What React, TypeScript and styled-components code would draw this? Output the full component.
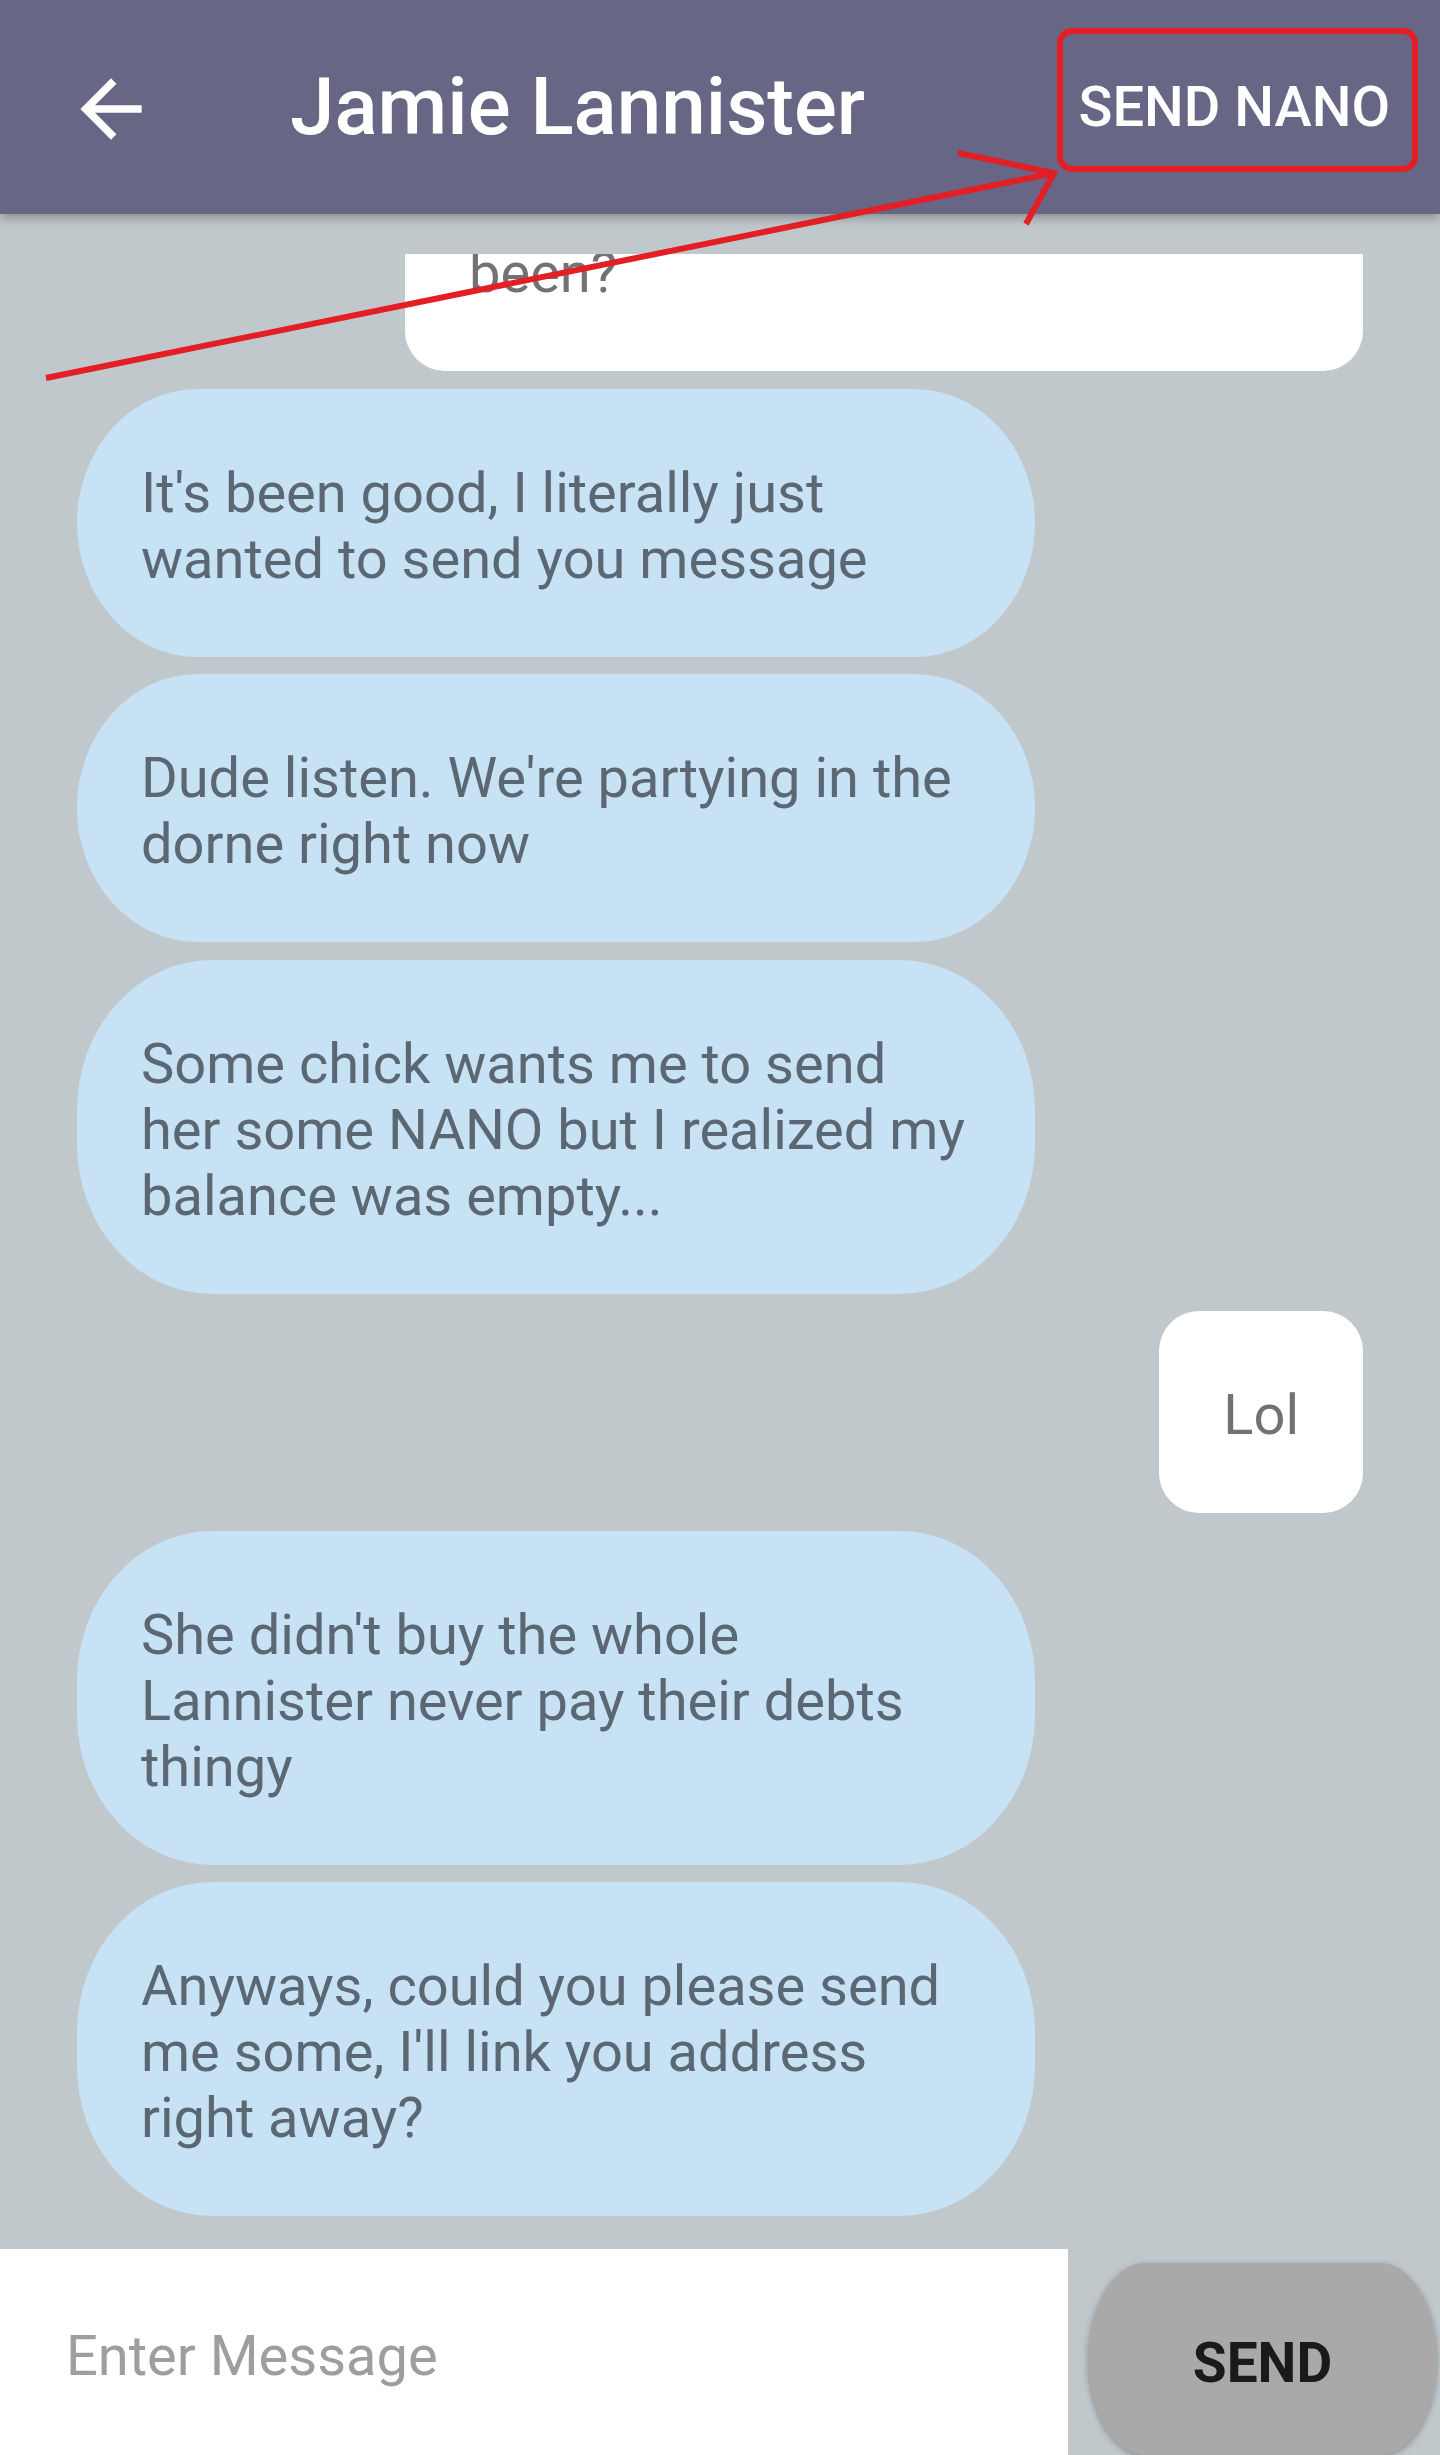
import React from 'react';
import styled, { createGlobalStyle } from 'styled-components';

const GlobalStyle = createGlobalStyle`
  html, body {
    margin: 0;
    padding: 0;
    background: #c1c8cc;
    font-family: Roboto, 'Noto Sans', Arial, sans-serif;
  }
`;

type Message = {
  id: number;
  mine: boolean;
  lines: string[];
};

const messages: Message[] = [
  { id: 1, mine: true, lines: ['Hey brother, how have you', 'been?'] },
  { id: 2, mine: false, lines: ["It's been good, I literally just", 'wanted to send you message'] },
  { id: 3, mine: false, lines: ["Dude listen. We're partying in the", 'dorne right now'] },
  {
    id: 4,
    mine: false,
    lines: ['Some chick wants me to send', 'her some NANO but I realized my', 'balance was empty...'],
  },
  { id: 5, mine: true, lines: ['Lol'] },
  {
    id: 6,
    mine: false,
    lines: ["She didn't buy the whole", 'Lannister never pay their debts', 'thingy'],
  },
  {
    id: 7,
    mine: false,
    lines: ['Anyways, could you please send', "me some, I'll link you address", 'right away?'],
  },
];

const App = () => {
  return (
    <Screen>
      <GlobalStyle />
      <Header>
        <BackButton aria-label="Back">
          <svg width="92" height="92" viewBox="0 0 24 24" fill="#ffffff">
            <path d="M20 11H7.83l5.59-5.59L12 4l-8 8 8 8 1.41-1.41L7.83 13H20v-2z" />
          </svg>
        </BackButton>
        <Title>Jamie Lannister</Title>
        <SendNano>SEND NANO</SendNano>
      </Header>

      <MessageList>
        <Track $offset={151}>
          {messages.map((m) => (
            <Bubble key={m.id} $mine={m.mine} $wide={m.lines.length > 1}>
              {m.lines.map((line, i) => (
                <Line key={i}>{line}</Line>
              ))}
            </Bubble>
          ))}
        </Track>
      </MessageList>

      <Composer>
        <MessageInput placeholder="Enter Message" />
        <SendButton>SEND</SendButton>
      </Composer>

      <Annotation viewBox="0 0 1440 400" width="1440" height="400">
        <rect x="1060" y="31" width="355" height="138" rx="12" fill="none" stroke="#e31e24" strokeWidth="6" />
        <line x1="46" y1="378" x2="1054" y2="173" stroke="#e31e24" strokeWidth="6" />
        <polyline
          points="958,153 1054,173 1026,224"
          fill="none"
          stroke="#e31e24"
          strokeWidth="6"
          strokeLinejoin="miter"
        />
      </Annotation>
    </Screen>
  );
};

export default App;

const Screen = styled.div`
  position: relative;
  display: flex;
  flex-direction: column;
  width: 1440px;
  height: 2455px;
  overflow: hidden;
  background: #c1c8cc;
`;

const Header = styled.header`
  position: relative;
  z-index: 2;
  display: flex;
  align-items: center;
  flex: 0 0 214px;
  padding-left: 65px;
  padding-right: 50px;
  box-sizing: border-box;
  background: #676685;
  box-shadow: 0 4px 10px rgba(0, 0, 0, 0.3);
`;

const BackButton = styled.button`
  display: flex;
  padding: 0;
  border: none;
  background: transparent;
  margin-top: 4px;
`;

const Title = styled.h1`
  margin: 0 0 0 133px;
  flex: 1;
  font-size: 80px;
  line-height: 100px;
  font-weight: 500;
  color: #ffffff;
`;

const SendNano = styled.span`
  font-size: 56px;
  font-weight: 500;
  color: #ffffff;
`;

const MessageList = styled.main`
  flex: 1;
  min-height: 0;
  margin-top: 40px;
  overflow: hidden;
`;

const Track = styled.div<{ $offset: number }>`
  display: flex;
  flex-direction: column;
  gap: 17.5px;
  padding: 0 77px;
  margin-top: ${(p) => -p.$offset}px;
`;

const Bubble = styled.div<{ $mine: boolean; $wide: boolean }>`
  align-self: ${(p) => (p.$mine ? 'flex-end' : 'flex-start')};
  width: ${(p) => (p.$wide ? '958px' : 'auto')};
  box-sizing: border-box;
  padding: 71px 64px 65px;
  background: ${(p) => (p.$mine ? '#ffffff' : '#c7e1f5')};
  color: ${(p) => (p.$mine ? '#727272' : '#5b6873')};
  border-radius: ${(p) => (p.$mine ? '40px' : '135px / 150px')};
  font-size: 56px;
  line-height: 66px;
`;

const Line = styled.span`
  display: block;
  white-space: nowrap;
`;

const Composer = styled.footer`
  display: flex;
  flex: 0 0 206px;
  background: #c1c8cc;
`;

const MessageInput = styled.input`
  width: 1068px;
  height: 100%;
  box-sizing: border-box;
  border: none;
  outline: none;
  padding: 8px 0 0 66px;
  background: #ffffff;
  font-family: Roboto, 'Noto Sans', Arial, sans-serif;
  font-size: 56px;
  color: #333;
  &::placeholder {
    color: #9e9e9e;
  }
`;

const SendButton = styled.button`
  width: 349px;
  height: 192px;
  margin: 14px 0 0 20px;
  padding: 8px 0 0;
  border: none;
  border-radius: 60px / 100px;
  background: #a9a9a9;
  box-shadow: 0 2px 6px rgba(0, 0, 0, 0.3);
  font-family: Roboto, 'Noto Sans', Arial, sans-serif;
  font-size: 55px;
  font-weight: 700;
  color: #1a1a1a;
`;

const Annotation = styled.svg`
  position: absolute;
  top: 0;
  left: 0;
  z-index: 3;
  pointer-events: none;
`;
